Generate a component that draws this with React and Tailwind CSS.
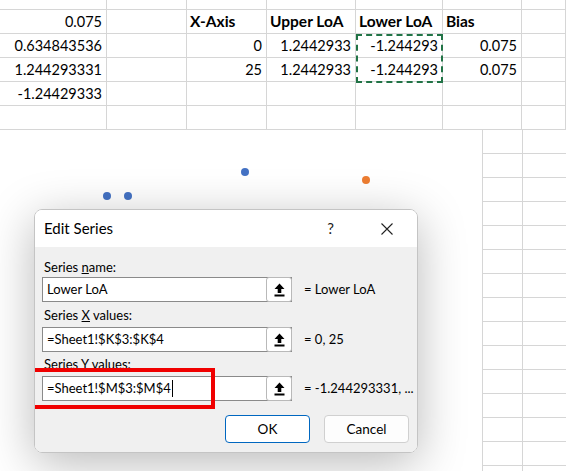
import React from "react";

const widths = [107, 80, 80, 89, 87, 79, 44];

const rows = [
  [
    { t: "0.075", a: "r" },
    { t: "" },
    { t: "X-Axis", b: true },
    { t: "Upper LoA", b: true },
    { t: "Lower LoA", b: true },
    { t: "Bias", b: true },
    { t: "" },
  ],
  [
    { t: "0.634843536", a: "r" },
    { t: "" },
    { t: "0", a: "r" },
    { t: "1.2442933", a: "r" },
    { t: "-1.244293", a: "r" },
    { t: "0.075", a: "r" },
    { t: "" },
  ],
  [
    { t: "1.244293331", a: "r" },
    { t: "" },
    { t: "25", a: "r" },
    { t: "1.2442933", a: "r" },
    { t: "-1.244293", a: "r" },
    { t: "0.075", a: "r" },
    { t: "" },
  ],
  [{ t: "-1.24429333", a: "r" }, { t: "" }, { t: "" }, { t: "" }, { t: "" }, { t: "" }, { t: "" }],
  [{ t: "" }, { t: "" }, { t: "" }, { t: "" }, { t: "" }, { t: "" }, { t: "" }],
];

function UploadIcon() {
  return (
    <svg width="11" height="14" viewBox="0 0 11 14">
      <path d="M5.5 0.5 L10.5 6 H7.3 V10 H3.7 V6 H0.5 Z" fill="#000" />
      <rect x="0.5" y="11.5" width="10" height="2" fill="#000" />
    </svg>
  );
}

function RefInput({ value, cursor }) {
  return (
    <div className="flex h-[25px] w-[250px] shrink-0 items-stretch border border-[#8a8a8a] bg-white">
      <div className="flex flex-1 items-center pl-[4px] text-[13px] text-black">
        <span>{value}</span>
        {cursor && <span className="ml-[1px] inline-block h-[17px] w-px bg-black" />}
      </div>
      <div className="-my-px -mr-px flex w-[26px] items-center justify-center rounded-[3px] border border-[#b9b9b9] bg-white">
        <UploadIcon />
      </div>
    </div>
  );
}

export default function App() {
  return (
    <div
      className="relative h-[471px] w-[566px] overflow-hidden bg-white"
      style={{ fontFamily: "Lato, 'Open Sans', sans-serif" }}
    >
      {/* top grid */}
      <div className="flex flex-col">
        <div className="flex h-[10px] border-b border-[#d6d6d6]">
          {widths.map((w, i) => (
            <div key={i} style={{ width: w }} className="shrink-0 border-r border-[#d6d6d6]" />
          ))}
        </div>
        {rows.map((r, ri) => (
          <div key={ri} className="flex h-[24px] border-b border-[#d6d6d6]">
            {r.map((c, ci) => (
              <div
                key={ci}
                style={{ width: widths[ci] }}
                className={
                  "flex shrink-0 items-center overflow-visible whitespace-nowrap border-r border-[#d6d6d6] pt-[1px] text-black " +
                  (c.a === "r" ? "justify-end pr-[4px] text-[14.5px] " : "justify-start pl-[3px] ") +
                  (c.b ? "text-[15.5px] font-bold" : "")
                }
              >
                {c.t}
              </div>
            ))}
          </div>
        ))}
      </div>

      {/* marquee around M3:M4 */}
      <div className="absolute left-[356px] top-[34px] h-[49px] w-[87px] border-2 border-dashed border-[#217346]" />

      {/* lower area: chart + grid */}
      <div className="flex">
        <div className="relative h-[341px] w-[483px] shrink-0 border-r border-[#d6d6d6] bg-white">
          <div className="absolute left-[103px] top-[62px] h-[8px] w-[8px] rounded-full bg-[#4472c4]" />
          <div className="absolute left-[124px] top-[62px] h-[8px] w-[8px] rounded-full bg-[#4472c4]" />
          <div className="absolute left-[241px] top-[38px] h-[8px] w-[8px] rounded-full bg-[#4472c4]" />
          <div className="absolute left-[362px] top-[46px] h-[8px] w-[8px] rounded-full bg-[#ed7d31]" />
        </div>
        <div className="flex flex-col">
          {Array.from({ length: 15 }).map((_, i) => (
            <div key={i} className="flex h-[24px] shrink-0 border-b border-[#d6d6d6]">
              <div className="w-[40px] shrink-0 border-r border-[#d6d6d6]" />
              <div className="w-[43px] shrink-0" />
            </div>
          ))}
        </div>
      </div>

      {/* dialog */}
      <div className="absolute left-[34px] top-[209px] flex h-[244px] w-[384px] flex-col overflow-hidden rounded-[8px] border border-[#c4c4c4] shadow-[0_10px_48px_rgba(0,0,0,0.28)]">
        <div className="flex h-[37px] shrink-0 items-center bg-white">
          <span className="ml-[9px] text-[15px] text-black">Edit Series</span>
          <span className="ml-auto mr-[47px] text-[15px] text-[#222]">?</span>
          <svg width="12" height="12" viewBox="0 0 12 12" className="mr-[24px]">
            <path d="M0.5 0.5 L11.5 11.5 M11.5 0.5 L0.5 11.5" stroke="#222" strokeWidth="1.1" />
          </svg>
        </div>
        <div className="flex flex-1 flex-col bg-[#f0f0f0] pl-[7px] text-[13px] text-black">
          <div className="mt-[11px] flex h-[19px] items-center pl-[2px]">
            <span>
              Series <span className="underline">n</span>ame:
            </span>
          </div>
          <div className="flex h-[25px] items-center">
            <RefInput value="Lower LoA" />
            <span className="ml-[12px] whitespace-nowrap">= Lower LoA</span>
          </div>
          <div className="mt-[4px] flex h-[19px] items-center pl-[2px]">
            <span>
              Series <span className="underline">X</span> values:
            </span>
          </div>
          <div className="mt-[2px] flex h-[25px] items-center">
            <RefInput value="=Sheet1!$K$3:$K$4" />
            <span className="ml-[12px] whitespace-nowrap">= 0, 25</span>
          </div>
          <div className="mt-[3px] flex h-[19px] items-center pl-[2px]">
            <span>
              Series <span className="underline">Y</span> values:
            </span>
          </div>
          <div className="mt-[2px] flex h-[25px] items-center">
            <div className="relative">
              <RefInput value="=Sheet1!$M$3:$M$4" cursor />
              <div className="absolute left-[-14px] top-[-8px] h-[41px] w-[187px] border-[4px] border-[#f00000]" />
            </div>
            <span className="ml-[12px] whitespace-nowrap">= -1.244293331, ...</span>
          </div>
          <div className="mt-[14px] flex justify-end gap-[14px] pr-[8px]">
            <button className="h-[28px] w-[85px] rounded-[4px] border border-[#0067c0] bg-white text-[13.5px] text-black">
              OK
            </button>
            <button className="h-[28px] w-[85px] rounded-[4px] border border-[#d0d0d0] bg-[#fdfdfd] text-[13.5px] text-black">
              Cancel
            </button>
          </div>
        </div>
      </div>
    </div>
  );
}
